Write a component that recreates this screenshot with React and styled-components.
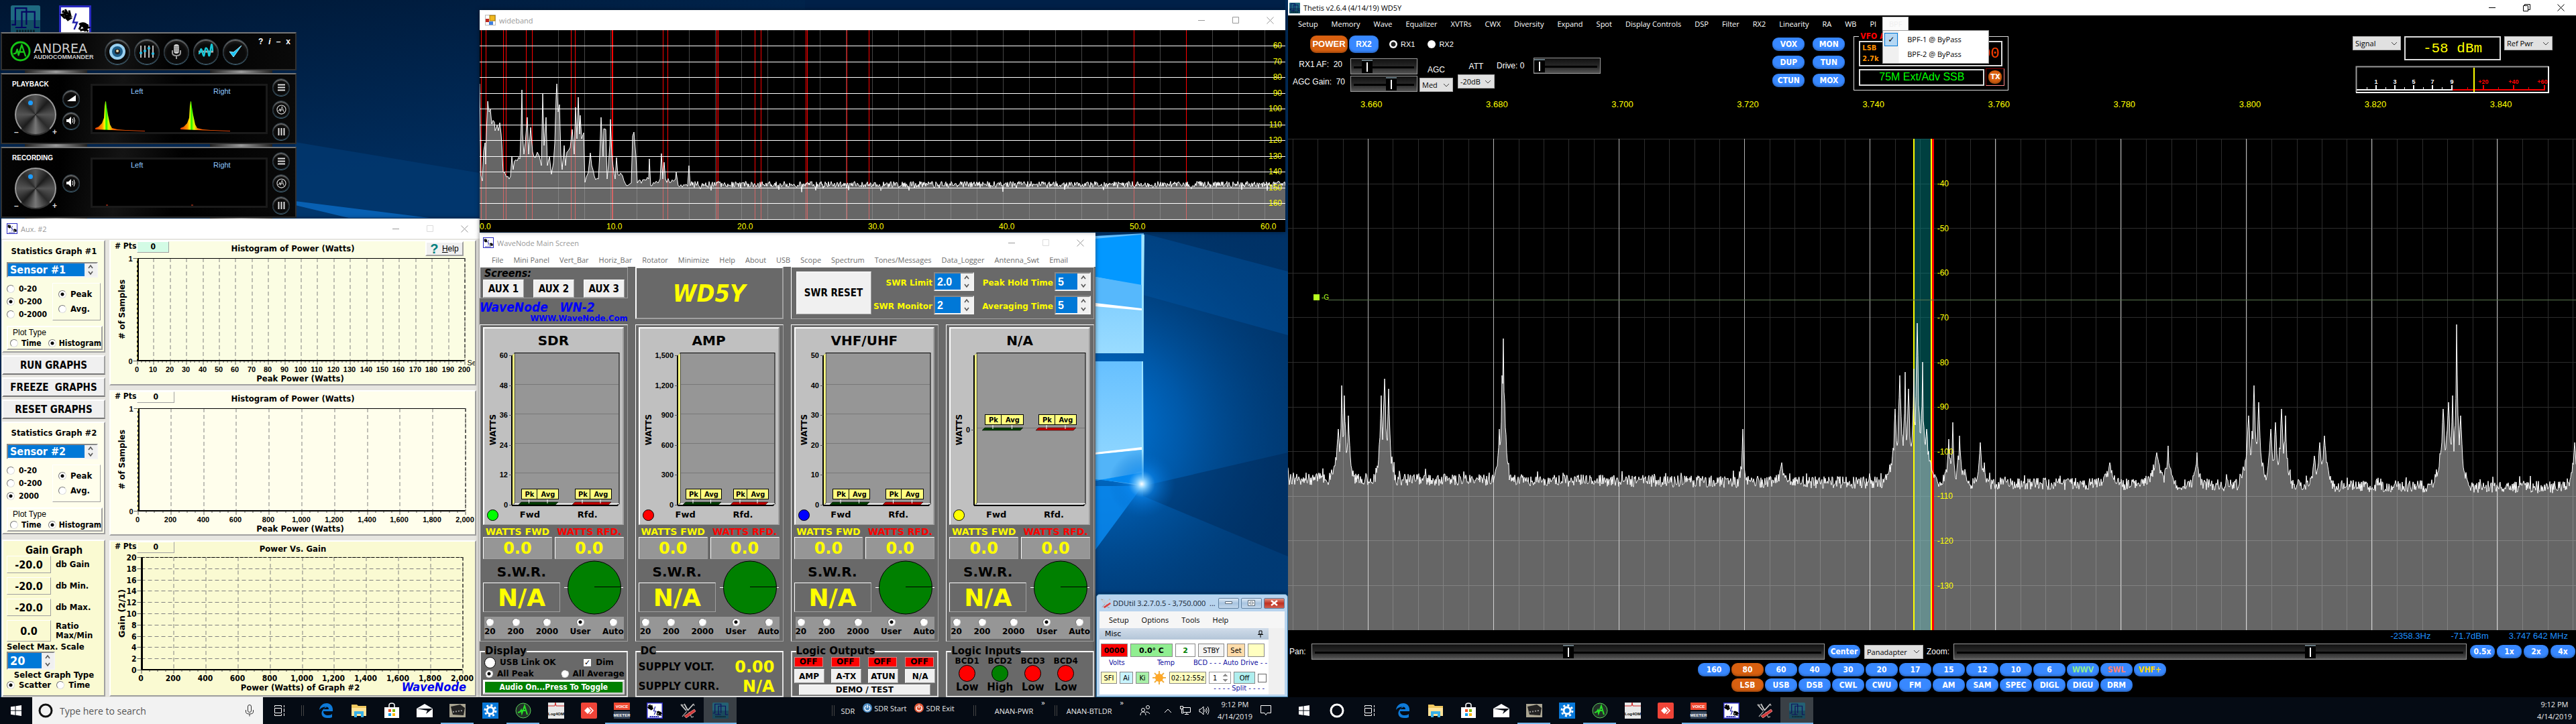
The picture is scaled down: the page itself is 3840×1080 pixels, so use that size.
import React from "react";
import styled, { createGlobalStyle, css } from "styled-components";

const tahoma = '"DejaVu Sans Condensed", "DejaVu Sans", sans-serif';
const verdana = '"DejaVu Sans", sans-serif';
const segoe = '"Open Sans", "Noto Sans", sans-serif';
const arial = '"Liberation Sans", sans-serif';
const mono = '"Liberation Mono", monospace';

const Global = createGlobalStyle`
  *, *::before, *::after { box-sizing: border-box; }
  html, body { margin: 0; background: #000; }
  body { font-family: ${segoe}; font-size: 11px; }
  button, input, select { margin: 0; padding: 0; border: 0; border-radius: 0; font: inherit; color: inherit; background: none; }
  svg { display: block; overflow: visible; }
  a { color: inherit; text-decoration: none; }
  h2, h3, p { margin: 0; font: inherit; }
  fieldset { margin: 0; padding: 0; border: 0; min-width: 0; }
`;

/* ---------- desktop ---------- */
const Screens = styled.div`
  display: grid;
  grid-template-columns: 1fr 1fr;
  min-height: 100vh;
`;
const Monitor = styled.main`
  display: flex;
  flex-direction: column;
  min-width: 0;
  position: relative;
  background: #00152e;
`;
const Desktop = styled.div`
  flex: 1;
  position: relative;
  overflow: hidden;
`;
const WallSvg = styled.svg`
  position: absolute;
  inset: 0;
  width: 100%;
  height: 100%;
`;
const Shortcuts = styled.div`
  position: absolute;
  left: 16px;
  top: 8px;
  display: flex;
  gap: 28px;
`;
const Win = styled.section`
  position: absolute;
  left: ${(p) => p.$x}px;
  top: ${(p) => p.$y}px;
  width: ${(p) => p.$w}px;
  height: ${(p) => p.$h}px;
  display: flex;
  flex-direction: column;
  overflow: hidden;
  box-shadow: 0 0 6px rgba(0, 0, 0, 0.5);
`;
const TitleBar = styled.header`
  display: flex;
  align-items: center;
  gap: 5px;
  height: ${(p) => p.$h || 30}px;
  flex: none;
  padding-left: ${(p) => p.$pad ?? 8}px;
  background: #fff;
  color: ${(p) => (p.$active ? "#000" : "#999")};
  font: 11px ${segoe};
  h2 { flex: 1; white-space: pre; }
`;
const CapBtn = styled.button`
  width: 46px;
  height: 100%;
  display: grid;
  place-items: center;
  color: ${(p) => (p.$dim ? "#dcdcdc" : "inherit")};
`;

const Wallpaper = () => (
  <WallSvg viewBox="0 0 1920 1040" preserveAspectRatio="none" aria-hidden="true">
    <defs>
      <linearGradient id="sky" x1="0" y1="0" x2="0.3" y2="1">
        <stop offset="0" stopColor="#001632" />
        <stop offset="0.3" stopColor="#002c5c" />
        <stop offset="1" stopColor="#003a75" />
      </linearGradient>
      <radialGradient id="glow" cx="1640" cy="640" r="360" gradientUnits="userSpaceOnUse">
        <stop offset="0" stopColor="#0078dc" />
        <stop offset="0.35" stopColor="#0058a8" />
        <stop offset="1" stopColor="#003468" stopOpacity="0" />
      </radialGradient>
      <linearGradient id="pane" x1="0" y1="0" x2="0" y2="1">
        <stop offset="0" stopColor="#66c0ff" />
        <stop offset="1" stopColor="#9adcff" />
      </linearGradient>
      <radialGradient id="flare" cx="1702" cy="722" r="50" gradientUnits="userSpaceOnUse">
        <stop offset="0" stopColor="#fff" />
        <stop offset="0.12" stopColor="#8fd4ff" />
        <stop offset="0.4" stopColor="#0a86ee" stopOpacity="0.6" />
        <stop offset="1" stopColor="#0064c0" stopOpacity="0" />
      </radialGradient>
    </defs>
    <rect width="1920" height="1040" fill="url(#sky)" />
    <path d="M440 212L715 258V330H440z" fill="#013a74" opacity=".7" />
    <path d="M440 300L640 325H520L440 306z" fill="#0a6cc4" opacity=".8" />
    <path d="M1200 0H1916V14H1200z" fill="#002048" />
    <rect x="1200" y="300" width="720" height="740" fill="url(#glow)" />
    <path d="M1704 348L1920 405V500L1704 440z" fill="#005cae" opacity=".35" />
    <path d="M1704 725L1920 675V830L1704 740z" fill="#001f48" opacity=".35" />
    <path d="M1633 725h70l-70 95z" fill="#0a8cf4" opacity=".8" />
    <path d="M1633 352l72-4v179h-72z" fill="url(#pane)" />
    <path d="M1633 356l68-6v76l-68-13z" fill="#0398ff" />
    <path d="M1633 413l69 12v37l-69-8z" fill="#56b8fc" />
    <path d="M1633 452l69 8v3l-69-6z" fill="#fff" />
    <path d="M1633 539h71v186l-71-11z" fill="url(#pane)" />
    <path d="M1633 675l69-8v4l-69 7z" fill="#fff" />
    <path d="M1633 678l69-7v35l-69 11z" fill="#52b4f8" />
    <path d="M1633 717l69-12v18l-69-8z" fill="#0290fa" />
    <path d="M1702 350h4l-2 177h-2zM1702 539h2l1 184h-3z" fill="#9fe4ff" />
    <rect x="1612" y="632" width="180" height="180" fill="url(#flare)" />
  </WallSvg>
);

/* ---------- small icons ---------- */
const WaveIcon = ({ s = 16 }) => (
  <svg width={s} height={s} viewBox="0 0 32 32" aria-hidden="true">
    <rect x="1" y="1" width="30" height="30" fill="#fff" stroke="#2a2ac0" strokeWidth="2" />
    <path d="M3 6l5 2-4 1 6 2-5 1 6 1-3 2M2 9l4 4M6 4l6 9M10 5l2 8M4 5l4 9M20 24l3-6 6 2M21 25l8-3-6-2 6 6M24 18l2 8M20 19q5-3 9 2" stroke="#000" fill="none" strokeWidth="2" />
    <path d="M17 8l-3 9h4l-3 7" stroke="#22a" fill="none" strokeWidth="1.6" />
    <path d="M6 28h18" stroke="#22a" strokeWidth="2.4" strokeDasharray="3 1" />
  </svg>
);
const HpsdrIcon = ({ s = 16, dim }) => (
  <svg width={s} height={s} viewBox="0 0 32 32" opacity={dim ? 0.8 : 1} aria-hidden="true">
    <rect x="0" y="0" width="32" height="32" rx="2" fill="#1f6a80" />
    <rect x="0" y="16" width="32" height="16" fill="#0b3c50" opacity=".6" />
    <path d="M1 21H5V3H17V21M12 24V7H26V24H31M5 24H17" stroke="#050560" fill="none" strokeWidth="1.6" />
    <path d="M6 28h20" stroke="#04202c" strokeWidth="3" strokeDasharray="2 1" />
  </svg>
);
const KnifeIcon = ({ s = 24 }) => (
  <svg width={s} height={s} viewBox="0 0 24 24" aria-hidden="true">
    <path d="M2 3l8 9M21 2l-9 10M7 2l5 9" stroke="#c8c8c8" strokeWidth="1.8" />
    <path d="M2 3l4 1M21 2l1 3M4 21l7-8M14 14l4 8 3-1" stroke="#999" strokeWidth="1.4" fill="none" />
    <path d="M22 10l2 3-14 10-3-3z" fill="#d03838" stroke="#f3a0a0" strokeWidth=".8" />
  </svg>
);
const AndreaMark = ({ s = 30, c = "#16c416", w = 3 }) => (
  <svg width={s} height={s} viewBox="0 0 32 32" fill="none" stroke={c} strokeWidth={w} strokeLinejoin="round" aria-hidden="true">
    <circle cx="16" cy="16" r="14" />
    <path d="M5 20l4-1 2-6 2 9 5-16 6 18M12 17h9" strokeWidth={w * 0.8} />
  </svg>
);
const Minus = () => <svg width="11" height="11" viewBox="0 0 11 11" aria-hidden="true"><path d="M0 5.5h10" stroke="currentColor" /></svg>;
const Box = () => <svg width="11" height="11" viewBox="0 0 11 11" aria-hidden="true"><path d="M.5.5h9v9h-9z" stroke="currentColor" fill="none" /></svg>;
const Cross = () => <svg width="11" height="11" viewBox="0 0 11 11" aria-hidden="true"><path d="M.5.5l10 10M10.500.5l-10 10" stroke="currentColor" /></svg>;
const Restore = () => <svg width="11" height="11" viewBox="0 0 11 11" aria-hidden="true"><path d="M.5 2.500h7v8h-7zM2.500 2.500v-2h8v8h-3" stroke="currentColor" fill="none" /></svg>;
const Chevron = () => <svg width="10" height="10" viewBox="0 0 10 10" aria-hidden="true"><path d="M1 3l4 4 4-4" stroke="#444" fill="none" /></svg>;

const Caption = ({ restore, dimMax }) => (
  <>
    <CapBtn aria-label="Minimize"><Minus /></CapBtn>
    <CapBtn aria-label="Maximize" $dim={dimMax}>{restore ? <Restore /> : <Box />}</CapBtn>
    <CapBtn aria-label="Close"><Cross /></CapBtn>
  </>
);

/* ---------- shared form parts ---------- */
const RadioInput = styled.input`
  appearance: none;
  flex: none;
  width: 12px;
  height: 12px;
  border-radius: 50%;
  background: #fff;
  border: 1px solid;
  border-color: #777 #ddd #ddd #777;
  &:checked { background: radial-gradient(circle, #000 0 2px, #fff 3px); }
`;
const RadioLabel = styled.label`
  display: flex;
  align-items: center;
  gap: ${(p) => p.$gap ?? 6}px;
  white-space: nowrap;
`;
const Radio = ({ name, label, on, gap }) => (
  <RadioLabel $gap={gap}><RadioInput type="radio" name={name} defaultChecked={on} />{label}</RadioLabel>
);
const ListBox = styled.div`
  display: grid;
  grid-template-columns: 1fr 18px;
  width: ${(p) => p.$w}px;
  height: ${(p) => p.$h}px;
  border: 2px solid;
  border-color: #888 #f4f4f4 #f4f4f4 #888;
  background: #fff;
  select {
    appearance: none;
    width: 100%;
    padding-left: 3px;
    background: #0078d7;
    color: #fff;
    font: bold ${(p) => p.$f}px ${(p) => p.$font || tahoma};
  }
  div { display: flex; flex-direction: column; background: #f0f0f0; }
  button { flex: 1; display: grid; place-items: center; min-height: 0; }
`;
const List = ({ label, value, w, h, f, font }) => (
  <ListBox $w={w} $h={h} $f={f} $font={font}>
    <select aria-label={label} defaultValue={value}><option>{value}</option></select>
    <div>
      <button aria-label={`${label} up`}><svg width="8" height="6" viewBox="0 0 8 6"><path d="M1 5l3-4 3 4" stroke="#555" strokeWidth="1.6" fill="none" /></svg></button>
      <button aria-label={`${label} down`}><svg width="8" height="6" viewBox="0 0 8 6"><path d="M1 1l3 4 3-4" stroke="#555" strokeWidth="1.6" fill="none" /></svg></button>
    </div>
  </ListBox>
);

/* ---------- Andrea AudioCommander ---------- */
const AndreaWin = styled.section`
  position: absolute;
  left: 1px;
  top: 48px;
  width: 441px;
  display: flex;
  flex-direction: column;
  color: #ddd;
  font: 11px ${arial};
`;
const Slab = styled.div`
  display: flex;
  height: ${(p) => p.$h}px;
  border: 2px solid #303030;
  border-top-color: #777;
  background: linear-gradient(100deg, #050505, #000 20%, #141414 40%, #000 60%, #0a0a0a);
`;
const Hinges = styled.div`
  display: flex;
  justify-content: space-between;
  height: 4px;
  padding: 0 36px;
  i { width: 93px; background: linear-gradient(90deg, #222, #999, #222); }
`;
const Brand = styled.div`
  display: flex;
  align-items: center;
  gap: 4px;
  width: 150px;
  padding-left: 12px;
  line-height: 1;
  b { display: block; font: 19px/16px ${verdana}; color: #ccc; }
  span { display: block; font: bold 9px/10px ${arial}; color: #ccc; }
`;
const BigBtns = styled.div`
  display: flex;
  flex: 1;
  align-items: center;
  gap: 6px;
  padding-left: 3px;
`;
const RoundBtn = styled.button`
  width: ${(p) => p.$s}px;
  height: ${(p) => p.$s}px;
  border-radius: 50%;
  display: grid;
  place-items: center;
  border: 1px solid #33424c;
  background: radial-gradient(circle at 50% 60%, #0a0a0a 50%, #3a3a3a);
  box-shadow: inset 0 2px 1px #666, 0 1px 0 #456c80;
`;
const SysKeys = styled.div`
  display: flex;
  gap: 8px;
  padding: 4px 7px;
  align-items: flex-start;
  color: #fff;
  font: bold 12px/16px ${arial};
`;
const DeviceLeft = styled.div`
  width: 90px;
  padding: 9px 0 0 15px;
  h3 { font: bold 10px/12px ${arial}; color: #fff; }
`;
const Knob = styled.div`
  position: relative;
  width: 62px;
  height: 62px;
  margin: 8px 0 0 4px;
  border-radius: 50%;
  border: 2px solid #999;
  border-bottom-color: #333;
  background: conic-gradient(#555, #1c1c1c 12%, #555 25%, #2a2a2a 38%, #777 50%, #1c1c1c 62%, #555 75%, #2a2a2a 88%, #555);
  &::after { content: ""; position: absolute; left: 18px; top: 8px; width: 7px; height: 7px; border-radius: 50%; background: #1c9cff; }
`;
const KnobEnds = styled.div`
  display: flex;
  justify-content: space-between;
  width: 64px;
  margin: -11px 0 0 3px;
  font: bold 12px/12px ${arial};
`;
const SideBtns = styled.div`
  display: flex;
  flex-direction: column;
  justify-content: center;
  gap: ${(p) => p.$g}px;
  width: ${(p) => p.$w}px;
  padding-top: 2px;
`;
const Display = styled.div`
  flex: 1;
  margin: 14px 7px 13px 0;
  border: 3px solid #1a1a1a;
  background: #000;
`;
const Burst = ({ x, low }) =>
  low ? <path d={`M${x + 16} 67h3`} stroke="#e04020" /> : (
    <path d={`M${x} 64V62l5-2 5-5 3-8 1-17 1-7h1l1 8 2 12 3 14 3 5 8 2 12 1 29 1v1z`} fill="url(#heat)" />
  );
const Device = ({ title, low }) => (
  <Slab $h={106}>
    <DeviceLeft>
      <h3>{title}</h3>
      <Knob />
      <KnobEnds><span>–</span><span>+</span></KnobEnds>
    </DeviceLeft>
    <SideBtns $w={42} $g={7}>
      {!low && <RoundBtn $s={26} aria-label="Level"><svg width="13" height="9"><path d="M0 9L13 0v9z" fill="#fff" /></svg></RoundBtn>}
      <RoundBtn $s={26} aria-label="Mute"><svg width="14" height="12" viewBox="0 0 14 12"><path d="M0 4h3l4-4v12L3 8H0z" fill="#fff" /><path d="M9 3q2 3 0 6M11 1q3 5 0 10" stroke="#fff" fill="none" /></svg></RoundBtn>
    </SideBtns>
    <Display>
      <svg width="100%" height="100%" viewBox="0 0 258 68" preserveAspectRatio="none" role="img" aria-label={`${title} level`}>
        <defs><linearGradient id="heat"><stop offset="0" stopColor="#e03000" /><stop offset=".14" stopColor="#ff9a00" /><stop offset=".19" stopColor="#ff0" /><stop offset=".22" stopColor="#1cf000" /><stop offset=".27" stopColor="#e0ff00" /><stop offset=".36" stopColor="#f60" /><stop offset="1" stopColor="#d84010" /></linearGradient></defs>
        <text x="57" y="12" fill="#8fc8ff" fontSize="11">Left</text>
        <text x="180" y="12" fill="#8fc8ff" fontSize="11">Right</text>
        <Burst x={4} low={low} />
        <Burst x={131} low={low} />
      </svg>
    </Display>
    <SideBtns $w={34} $g={7}>
      <RoundBtn $s={26} aria-label="Menu"><svg width="11" height="11"><path d="M0 1.500h11M0 5.500h11M0 9.500h11" stroke="#ddd" strokeWidth="2" /></svg></RoundBtn>
      <RoundBtn $s={26} aria-label="Profile"><AndreaMark s={15} c="#ddd" w={2.4} /></RoundBtn>
      <RoundBtn $s={26} aria-label="Equalizer"><svg width="11" height="11"><path d="M1.500 0v11M5.500 0v11M9.500 0v11" stroke="#ddd" strokeWidth="2" /></svg></RoundBtn>
    </SideBtns>
  </Slab>
);
const Andrea = () => (
  <AndreaWin>
    <Slab $h={57}>
      <Brand><AndreaMark s={31} /><div><b>ANDREA</b><span>AUDIOCOMMANDER</span></div></Brand>
      <BigBtns>
        <RoundBtn $s={38} aria-label="Speaker"><svg width="26" height="26"><circle cx="13" cy="13" r="12" fill="#9ad0f0" /><circle cx="13" cy="13" r="8" fill="#1c5c88" /><circle cx="13" cy="13" r="4" fill="#222" /><circle cx="13" cy="12" r="2" fill="#e8d8b0" /></svg></RoundBtn>
        <RoundBtn $s={38} aria-label="Mixer"><svg width="22" height="20"><path d="M2 1v18M8 1v18M14 1v18M20 1v18" stroke="#bbb" strokeWidth="2" /><path d="M0 12h4M6 9h4M12 5h4M18 13h4" stroke="#20b8e0" strokeWidth="3" /></svg></RoundBtn>
        <RoundBtn $s={38} aria-label="Microphone"><svg width="16" height="24"><rect x="4" y="1" width="8" height="14" rx="4" fill="#ccc" /><path d="M4 5h8M4 8h8M4 11h8" stroke="#555" /><path d="M2 10v4q0 4 6 4t6-4v-4M8 18v5" stroke="#999" strokeWidth="2" fill="none" /></svg></RoundBtn>
        <RoundBtn $s={38} aria-label="Wave"><svg width="24" height="18"><path d="M1 9h22" stroke="#aaa" strokeWidth="3" /><path d="M1 12q2 0 3-5t3 4 3 0 3-7 3 9 3-8 3 3" stroke="#18c8d8" strokeWidth="2.4" fill="none" /></svg></RoundBtn>
        <RoundBtn $s={38} aria-label="Apply"><svg width="20" height="20"><path d="M1 10l6 8L19 1 7 11z" fill="#18c4f4" stroke="#9ae8ff" /></svg></RoundBtn>
      </BigBtns>
      <SysKeys><span>?</span><i>i</i><span>–</span><span>x</span></SysKeys>
    </Slab>
    <Hinges><i /><i /></Hinges>
    <Device title="PLAYBACK" />
    <Hinges><i /><i /></Hinges>
    <Device title="RECORDING" low />
    <Hinges><i /><i /></Hinges>
  </AndreaWin>
);

/* ---------- Aux #2 ---------- */
const raised = css`
  border: 2px solid;
  border-color: #fff #a0a0a0 #a0a0a0 #fff;
`;
const thin = css`
  border: 1px solid;
  border-color: #fff #a0a0a0 #a0a0a0 #fff;
`;
const AuxBody = styled.div`
  flex: 1;
  display: grid;
  grid-template-columns: 154px 1fr;
  gap: 6px;
  padding: 2px 5px 1px 1px;
  background: #e6e5e0;
  color: #000;
  font: bold 12px/14px ${tahoma};
  min-height: 0;
`;
const AuxSide = styled.div`
  display: grid;
  grid-template-rows: 168px 29px 29px 29px 168px 1fr;
  gap: 4px;
`;
const AuxPanel = styled.div`
  ${raised}
  background: ${(p) => p.$bg};
  padding: ${(p) => p.$pad || "7px 2px 2px 5px"};
  display: flex;
  flex-direction: column;
  gap: ${(p) => p.$gap || 0}px;
  min-width: 0;
  min-height: 0;
  margin-top: ${(p) => p.$mt || 0}px;
`;
const AuxTitle = styled.h3`
  font: bold ${(p) => p.$f || 13}px/16px ${tahoma};
  text-align: center;
  white-space: nowrap;
  padding-right: 2px;
`;
const GraphBtn = styled.button`
  ${raised}
  border-bottom-color: #777;
  background: #f0f0f0;
  font: bold 15px ${tahoma};
  white-space: pre;
`;
const Split = styled.div`
  display: grid;
  grid-template-columns: 68px 1fr;
  height: 60px;
  > div:first-child { display: flex; flex-direction: column; justify-content: space-around; }
`;
const ThinBox = styled.div`
  ${thin}
  display: flex;
  flex-direction: column;
  justify-content: space-evenly;
  padding-left: 8px;
  font-size: 13px;
  margin-right: 3px;
`;
const PlotType = styled.fieldset`
  ${raised}
  margin: auto 0 0 0;
  height: 38px;
  padding: 0 0 0 1px;
  font: 12px/16px ${arial};
  p { padding-left: 6px; }
  div { display: flex; justify-content: space-between; font: bold 12px/16px ${tahoma}; padding-left: 2px; }
`;
const GainRow = styled.div`
  display: grid;
  grid-template-columns: 66px 1fr;
  gap: 7px;
  align-items: center;
  height: ${(p) => p.$h || 26}px;
  margin-bottom: ${(p) => p.$mb ?? 6}px;
  font-size: 13px;
  output { ${thin} height: 100%; display: grid; place-items: center; font: bold 16px ${tahoma}; }
`;
const ChartPanel = styled.div`
  ${raised}
  position: relative;
  background: ${(p) => p.$bg};
  display: flex;
  flex-direction: column;
  min-height: 0;
  overflow: hidden;
`;
const ChartCol = styled.div`
  display: grid;
  grid-template-rows: 217px 217px 1fr;
  gap: 7px;
  min-width: 0;
`;
const ChartHead = styled.div`
  display: grid;
  grid-template-columns: 1fr auto 1fr;
  height: 22px;
  h3 { font: bold 13px/22px ${tahoma}; }
  > div:first-child { display: flex; padding-left: 6px; gap: 1px; font: bold 12px/14px ${tahoma}; }
  output { ${thin} width: ${(p) => p.$w}px; height: 17px; background: ${(p) => p.$pt || "transparent"}; text-align: center; }
`;
const HelpBtn = styled.button`
  ${raised}
  justify-self: end;
  width: 57px;
  height: 22px;
  margin-right: 17px;
  display: flex;
  align-items: center;
  justify-content: space-evenly;
  background: #f0f0f0;
  font: 12px ${arial};
  b { color: #008080; font: bold 20px/20px ${arial}; }
`;

const range = (n) => Array.from({ length: n }, (_, i) => i);
const Plot = ({ h, x0, x1, y0, y1, xs, ys, hgrid, big, xlabel, ylabel, mark, extra }) => {
  const lf = big ? { fontFamily: tahoma, fontSize: 12 } : { fontFamily: arial, fontSize: 11 };
  const nx = xs.length - 1;
  const px = (i) => Math.round(x0 + ((x1 - x0) * i) / nx) + 0.5;
  const py = (i) => Math.round(y1 - ((y1 - y0) * i) / (ys.length - 1)) + 0.5;
  return (
    <svg width="100%" height={h} viewBox={`0 0 542 ${h}`} fontWeight="bold" role="img" aria-label={xlabel}>
      <g stroke="#808080" strokeDasharray="6 4">
        {xs.map((_, i) => <path key={i} d={`M${px(i)} ${y0}V${y1}`} />)}
        {hgrid && ys.map((_, i) => <path key={i} d={`M${x0} ${py(i)}H${x1}`} />)}
      </g>
      <path d={`M${x0} ${y0 + 0.5}H${x1}`} stroke="#000" strokeDasharray={hgrid ? "5 2" : "none"} />
      <path d={`M${x1 + 0.5} ${y0}V${y1}`} stroke="#000" strokeDasharray="5 3" />
      <path d={`M${x0 + 1} ${y0}V${y1}`} stroke="#000" strokeWidth="3" />
      {mark && <path d={`M${x0} ${y0}V${y1}`} stroke="#e8e060" strokeDasharray="4 3" />}
      <path d={`M${x0} ${y1}H${x1}`} stroke="#000" strokeWidth="2" />
      <g stroke="#555">
        {range(nx * 4 + 1).map((i) => <path key={i} d={`M${Math.round(x0 + ((x1 - x0) * i) / (nx * 4)) + 0.5} ${y1 + 1}v${i % 4 ? 2 : 5}`} />)}
        {ys.map((_, i) => <path key={i} d={`M${x0 - 6} ${py(i)}h6`} />)}
      </g>
      {xs.map((t, i) => <text key={i} x={px(i) - 1} y={y1 + 17} textAnchor="middle" {...lf}>{t}</text>)}
      {ys.map((t, i) => <text key={i} x={x0 - 7} y={py(i) + 4} textAnchor="end" {...lf}>{t}</text>)}
      <text x="282" y={y1 + 31} textAnchor="middle" fontFamily={tahoma} fontSize="13">{xlabel}</text>
      <text transform={`translate(20 ${(y0 + y1) / 2}) rotate(-90)`} textAnchor="middle" fontFamily={verdana} fontSize={big ? 13 : 12}>{ylabel}</text>
      {extra}
    </svg>
  );
};

const StatsPanel = ({ n, bg, last, on }) => (
  <AuxPanel $bg={bg} $gap={8}>
    <AuxTitle>Statistics Graph #{n}</AuxTitle>
    <List label={`Sensor for graph ${n}`} value={`Sensor #${n}`} w={136} h={24} f={16} />
    <Split>
      <div>
        <Radio name={`range${n}`} label="0-20" />
        <Radio name={`range${n}`} label="0-200" on={on === 1} />
        <Radio name={`range${n}`} label={last} on={on === 2} />
      </div>
      <ThinBox>
        <Radio name={`mode${n}`} label="Peak" on />
        <Radio name={`mode${n}`} label="Avg." />
      </ThinBox>
    </Split>
    <PlotType>
      <p>Plot Type</p>
      <div><Radio name={`plot${n}`} label="Time" gap={5} /><Radio name={`plot${n}`} label="Histogram" gap={4} on /></div>
    </PlotType>
  </AuxPanel>
);
const CornerLogo = styled.em`
  position: absolute;
  right: 13px;
  bottom: 2px;
  color: #0000f0;
  font: italic bold 18px/20px ${tahoma};
`;
const MaxScale = styled.div`
  display: flex;
  flex-direction: column;
  font: bold 13px/14px ${tahoma};
`;
const RadioRow = styled.div`
  display: flex;
  gap: ${(p) => p.$g || 8}px;
`;
const thousands = range(11).map((i) => (i * 200).toLocaleString("en-US"));
const Aux = () => (
  <Win $x={2} $y={326} $w={713} $h={714}>
    <TitleBar><WaveIcon /><h2>Aux. #2</h2><Caption dimMax /></TitleBar>
    <AuxBody>
      <AuxSide>
        <StatsPanel n={1} bg="#fbfde3" last="0-2000" on={1} />
        <GraphBtn>RUN GRAPHS</GraphBtn>
        <GraphBtn>FREEZE  GRAPHS</GraphBtn>
        <GraphBtn>RESET GRAPHS</GraphBtn>
        <StatsPanel n={2} bg="#fffeec" last="2000" on={2} />
        <AuxPanel $bg="#fafad2" $mt={4} $pad="6px 2px 0 5px">
          <AuxTitle $f={15}>Gain Graph</AuxTitle>
          <GainRow><output>-20.0</output><span>db Gain</span></GainRow>
          <GainRow><output>-20.0</output><span>db Min.</span></GainRow>
          <GainRow><output>-20.0</output><span>db Max.</span></GainRow>
          <GainRow $h={32} $mb={1}><output>0.0</output><span>Ratio Max/Min</span></GainRow>
          <MaxScale>
            <span>Select Max. Scale</span>
            <List label="Max scale" value="20" w={72} h={27} f={18} />
            <AuxTitle>Select Graph Type</AuxTitle>
            <RadioRow><Radio name="gt" label="Scatter" on /><Radio name="gt" label="Time" /></RadioRow>
          </MaxScale>
        </AuxPanel>
      </AuxSide>
      <ChartCol>
        <ChartPanel $bg="#fbfde3">
          <ChartHead $w={48} $pt="#d3fbe5">
            <div># Pts<output>0</output></div>
            <h3>Histogram of Power (Watts)</h3>
            <HelpBtn><b>?</b><span><u>H</u>elp</span></HelpBtn>
          </ChartHead>
          <Plot h={191} x0={39} x1={527} y0={3} y1={156} mark xs={range(21).map((i) => i * 10)} ys={[0, 1]} xlabel="Peak Power (Watts)" ylabel="# of Samples"
            extra={<text x="531" y="163" fontFamily={arial} fontWeight="normal" fontSize="11">Se</text>} />
        </ChartPanel>
        <ChartPanel $bg="#fffeec">
          <ChartHead $w={56}>
            <div># Pts<output>0</output></div>
            <h3>Histogram of Power (Watts)</h3>
            <span />
          </ChartHead>
          <Plot h={191} x0={40} x1={528} y0={3} y1={156} mark xs={thousands} ys={[0, 1]} xlabel="Peak Power (Watts)" ylabel="# of Samples" />
        </ChartPanel>
        <ChartPanel $bg="#fafad2">
          <ChartHead $w={56}>
            <div># Pts<output>0</output></div>
            <h3>Power Vs. Gain</h3>
            <span />
          </ChartHead>
          <Plot h={206} x0={45} x1={524} y0={1} y1={169} hgrid big xs={thousands} ys={range(11).map((i) => i * 2)} xlabel="Power (Watts) of Graph #2" ylabel="Gain (2/1)" />
          <CornerLogo>WaveNode</CornerLogo>
        </ChartPanel>
      </ChartCol>
    </AuxBody>
  </Win>
);

/* ---------- wideband ---------- */
const WbPlot = styled.div`
  flex: 1;
  background: #000;
  svg { width: 100%; height: 100%; }
`;
const rng = (seed) => () => ((seed = (seed * 16807) % 2147483647) / 2147483647);
const wbPeaks = [0,80,1,155,2,217,4,225,6,180,8,168,9,200,10,155,12,106,14,122,16,118,18,140,22,137,23,150,26,142,28,150,30,138,32,155,33,170,35,212,40,219,44,222,46,218,48,188,50,208,52,195,56,195,60,192,62,140,63,89,64,155,66,185,68,168,71,130,73,185,76,145,79,182,83,190,86,182,89,188,92,202,94,95,96,172,99,130,101,202,104,188,107,215,110,198,112,168,114,98,115,80,117,122,119,111,121,185,123,208,126,172,128,202,130,182,135,175,138,148,141,185,143,115,145,162,147,100,149,155,150,127,152,162,155,153,157,227,162,212,165,183,167,202,171,218,177,222,179,185,181,130,184,188,185,147,188,148,190,222,194,172,195,133,197,185,202,222,204,190,206,215,213,217,219,232,226,228,228,158,230,152,233,188,235,228,246,223,252,222,253,192,255,232,266,228,269,222,271,184,273,222,275,197,277,222,285,227,292,222,293,212,296,232,310,233,312,202,314,232];
const wbTrace = (() => {
  const r = rng(77);
  const pts = [];
  for (let i = 0; i < wbPeaks.length; i += 2) {
    const [x, y, nx, ny] = wbPeaks.slice(i, i + 4);
    pts.push([x, y]);
    if (nx - x > 3) for (let k = x + 2; k < nx - 1; k += 2) pts.push([k, y + ((ny - y) * (k - x)) / (nx - x) + (r() - 0.5) * 8]);
  }
  for (let x = 316; x <= 1201; x += 1) pts.push([x, 230 + (r() - 0.5) * 9 + (r() > 0.97 ? 7 : 0)]);
  return pts.map(([x, y]) => `${x},${y.toFixed(1)}`).join(" ");
})();
const wbRed = [2, 9, 35, 39, 69, 78, 136, 142, 197, 198, 273, 280, 353, 355, 410, 419, 486, 488, 547, 580, 975, 1053];
const Wideband = () => (
  <Win $x={715} $y={15} $w={1201} $h={331}>
    <TitleBar>
      <svg width="16" height="16" aria-hidden="true"><rect x=".5" y=".5" width="15" height="15" fill="#fff" stroke="#bbb" /><rect x="7" y="1" width="8" height="8" fill="#f0b820" stroke="#a87800" /><rect x="1" y="6" width="5" height="5" fill="#c02820" /><rect x="6" y="10" width="6" height="5" fill="#4080e0" /></svg>
      <h2>wideband</h2><Caption />
    </TitleBar>
    <WbPlot>
      <svg viewBox="0 0 1201 301" preserveAspectRatio="none" role="img" aria-label="Wideband spectrum">
        <g stroke="#444">{range(30).map((i) => <path key={i} d={`M${(i + 1) * 39 + 0.5} 0V282`} />)}</g>
        <g stroke="#f00">{wbRed.map((x) => <path key={x} d={`M${x + 0.5} 0V282`} />)}</g>
        <polygon points={`0,282 ${wbTrace} 1201,282`} fill="#b0b0b0" fillOpacity=".58" />
        <g stroke="#fff">{range(12).map((i) => <path key={i} d={`M0 ${Math.round(23 + i * 23.5) + 0.5}H1201`} />)}</g>
        <polyline points={wbTrace} fill="none" stroke="#fff" />
        <g fill="#ff0" fontFamily={arial} fontSize="12">
          {range(11).map((i) => <text key={i} x="1196" y={Math.round(27 + i * 23.5)} textAnchor="end">{60 + i * 10}</text>)}
          {range(7).map((i) => <text key={i} x={i ? i * 195 - 6 : 0} y="297">{(i * 10).toFixed(1)}</text>)}
        </g>
      </svg>
    </WbPlot>
  </Win>
);

/* ---------- WaveNode main ---------- */
const MenuBar = styled.nav`
  display: flex;
  align-items: center;
  flex: none;
  gap: ${(p) => p.$gap}px;
  height: ${(p) => p.$h}px;
  padding-left: ${(p) => p.$pad}px;
  background: ${(p) => p.$bg};
  color: ${(p) => p.$c};
  font: ${(p) => p.$f || 11}px ${segoe};
  button { white-space: nowrap; height: 20px; }
`;
const WnBody = styled.div`
  flex: 1;
  display: grid;
  grid-template-columns: repeat(4, 1fr);
  grid-template-rows: 78px 473px 1fr;
  gap: 8px 11px;
  padding: 0 2px 0 0;
  background: #696969;
  color: #000;
  font: bold 13px/15px ${verdana};
`;
const Sunk = styled.div`
  ${thin}
  border-width: ${(p) => p.$b || 1}px;
  min-width: 0;
  grid-column: span ${(p) => p.$span || 1};
  display: flex;
`;
const ScreensCell = styled.div`
  display: flex;
  flex-direction: column;
  > a { text-align: right; color: #00f; font: bold 13px/13px ${tahoma}; }
  > em { color: #00f; font: italic bold 19px/20px ${tahoma}; white-space: pre; padding-top: 3px; }
`;
const ScreensBox = styled.div`
  ${thin}
  height: 52px;
  em { display: block; font: italic bold 16px/18px ${tahoma}; padding-left: 6px; }
  div { display: flex; justify-content: space-between; padding: 0 4px; }
`;
const FlatBtn = styled.button`
  ${thin}
  background: #f0f0f0;
  width: ${(p) => (p.$w ? `${p.$w}px` : "auto")};
  height: ${(p) => p.$h}px;
  font: bold ${(p) => p.$f}px ${(p) => p.$font || tahoma};
  white-space: nowrap;
`;
const CallSign = styled.em`
  margin: auto;
  color: #ff0;
  font: italic bold 36px ${tahoma};
`;
const SwrGrid = styled.div`
  flex: 1;
  display: grid;
  grid-template-columns: 1fr 60px 116px 54px;
  grid-template-rows: 27px 27px;
  gap: 8px 2px;
  align-content: center;
  padding-right: 4px;
  text-align: right;
  color: #ff0;
  font: bold 12px/32px ${verdana};
  white-space: nowrap;
`;
const ChannelBox = styled.div`
  ${thin}
  display: flex;
  flex-direction: column;
  padding: 3px 5px 0 4px;
  min-width: 0;
`;
const MeterCard = styled.div`
  ${thin}
  border-width: 2px 2px 1px 2px;
  height: 295px;
  background: #c0c0c0;
  display: flex;
  flex-direction: column;
  h3 { font: bold 20px/36px ${verdana}; text-align: center; }
`;
const MeterFoot = styled.div`
  display: grid;
  grid-template-columns: 16px 1fr 1fr;
  align-items: center;
  padding: 0 14px 0 4px;
  height: 20px;
  gap: 10px;
  text-align: center;
  line-height: 14px;
`;
const Led = styled.i`
  display: block;
  width: ${(p) => p.$s || 17}px;
  height: ${(p) => p.$s || 17}px;
  border-radius: 50%;
  border: 1px solid #000;
  background: ${(p) => p.$c};
`;
const Pair = styled.div`
  display: grid;
  grid-template-columns: 1fr 1fr;
  column-gap: 4px;
  padding-top: 3px;
  span { color: #ff0; font: bold 14px/15px ${verdana}; white-space: nowrap; text-align: center; }
  span:nth-child(2) { color: #f00; }
  output { ${thin} height: 33px; background: #969696; color: #ff0; font: bold 24px/32px ${verdana}; text-align: center; }
`;
const SwrRow = styled.div`
  display: grid;
  grid-template-columns: 115px 1fr;
  gap: 4px;
  padding-top: 2px;
  height: 83px;
  p { font: bold 20px/32px ${verdana}; text-align: center; padding-top: 1px; }
  output { ${thin} display: block; height: 44px; color: #ff0; font: bold 36px/44px ${verdana}; text-align: center; }
`;
const ScaleRow = styled.div`
  display: flex;
  justify-content: space-between;
  height: 33px;
  margin: 3px 0 0 2px;
  padding: 2px 0 0 0;
  background: #969696;
  label { display: flex; flex-direction: column; align-items: center; gap: 1px; font: bold 12px/15px ${verdana}; }
`;
const Tags = ({ p, y, c, by }) => (
  <g>
    <path d={`M${p[0]} ${by}h${p[2] - p[0]}l-4 4h${p[0] - p[2]}z`} fill={c} stroke="#000" strokeWidth=".5" />
    <path d={`M${(p[0] + p[1]) / 2} ${y + 15}V${by + 2}M${(p[1] + p[2]) / 2} ${y + 15}V${by + 2}`} stroke="#fff" />
    <g fill="#ffff80" stroke="#000"><rect x={p[0] + 0.5} y={y + 0.5} width={p[1] - p[0]} height="15" /><rect x={p[1] + 0.5} y={y + 0.5} width={p[2] - p[1]} height="15" /></g>
    <g fontFamily={tahoma} fontSize="11" fontWeight="bold" textAnchor="middle"><text x={(p[0] + p[1]) / 2 + 1} y={y + 12}>Pk</text><text x={(p[1] + p[2]) / 2 + 1} y={y + 12}>Avg</text></g>
  </g>
);
const Channel = ({ title, left, right, labels, led, fwd, rfd, mid }) => (
  <ChannelBox>
    <MeterCard>
      <h3>{title}</h3>
      <svg width="205" height="232" viewBox="0 0 205 232" role="img" aria-label={`${title} power`}>
        <rect x={left} y=".5" width={right - left} height="225" fill="#969696" stroke="#000" />
        <path d={`M${left - 4} 4L${left} 1V224L${left - 4} 228z`} fill="#ffff80" stroke="#777" strokeWidth=".5" />
        <path d={`M${left - 4} 4V228`} stroke="#000" strokeWidth="2" />
        <path d={`M${left - 4} 228H${right - 3}l3-3`} stroke="#000" strokeWidth="2" fill="none" />
        <path d={`M${left} 225.500H${right}`} stroke="#fff" strokeWidth="1.500" />
        {!mid && range(4).map((i) => <path key={i} d={`M${left + 1} ${47.5 + i * 44}H${right - 1}`} stroke="#777" />)}
        {mid && <path d={`M${left + 1} 112.500H${right - 1}`} stroke="#777" />}
        <g fontFamily={arial} fontWeight="bold" fontSize="11" textAnchor="end">
          {labels.map((t, i) => {
            const y = mid ? 115 : 4 + i * 44.6;
            return <g key={t}><text x={left - 10} y={Math.round(y) + 4}>{t}</text><path d={`M${left - 8} ${Math.round(y) + 0.5}h4`} stroke="#555" /></g>;
          })}
        </g>
        <text transform="translate(17 115) rotate(-90)" textAnchor="middle" fontFamily={verdana} fontWeight="bold" fontSize="12">WATTS</text>
        <Tags p={fwd} y={mid ? 92 : 203} by={mid ? 112 : 223} c="#003c00" />
        <Tags p={rfd} y={mid ? 92 : 203} by={mid ? 112 : 223} c="#c00000" />
      </svg>
      <MeterFoot><Led $c={led} /><span>Fwd</span><span>Rfd.</span></MeterFoot>
    </MeterCard>
    <Pair><span>WATTS FWD</span><span>WATTS RFD.</span><output>0.0</output><output>0.0</output></Pair>
    <SwrRow>
      <div><p>S.W.R.</p><output>N/A</output></div>
      <svg width="92" height="81" viewBox="0 0 92 81" role="img" aria-label="SWR gauge">
        <path d="M2 40.500h88" stroke="#fff" />
        <circle cx="47" cy="40.500" r="39.500" fill="#008000" stroke="#000" />
        <path d="M47 39.500h40" stroke="#000" />
      </svg>
    </SwrRow>
    <ScaleRow>
      {["20", "200", "2000", "User", "Auto"].map((t) => <label key={t}><RadioInput type="radio" name={`scale-${title}`} defaultChecked={t === "User"} />{t}</label>)}
    </ScaleRow>
  </ChannelBox>
);
const Group = styled.fieldset`
  border: 2px solid #ddd;
  border-top-color: #fff;
  margin: -2px 0 0 0;
  padding: 0 3px;
  legend { padding: 0; margin-left: 3px; font: bold 15px/17px ${verdana}; }
`;
const Line = styled.div`
  display: flex;
  align-items: center;
  justify-content: ${(p) => p.$j || "space-between"};
  height: ${(p) => p.$h}px;
  gap: ${(p) => p.$g || 0}px;
  padding: ${(p) => p.$p || 0};
  font: bold ${(p) => p.$f || 12}px/15px ${verdana};
  white-space: nowrap;
`;
const Check = styled.input`
  appearance: none;
  width: 13px;
  height: 13px;
  background: #fff;
  border: 1px solid #666;
  display: grid;
  place-items: center;
  &:checked::after { content: "✓"; font: bold 11px/11px ${verdana}; color: #000; }
`;
const AudioBtn = styled.button`
  width: 100%;
  height: 22px;
  background: #008000;
  color: #fff;
  border: 3px solid;
  border-color: #fff #ccc #ccc #fff;
  font: bold 12px/14px ${tahoma};
`;
const Supply = styled.div`
  display: flex;
  justify-content: space-between;
  align-items: center;
  height: 29px;
  font: bold 15px ${verdana};
  padding-right: 8px;
  white-space: nowrap;
  output { color: #ff0; font: bold 24px/28px ${verdana}; }
`;
const Outs = styled.div`
  display: grid;
  grid-template-columns: repeat(4, 1fr);
  gap: 3px 10px;
  span { background: #f00; border: 1px solid #c88; text-align: center; font: bold 12px/13px ${verdana}; margin-right: 2px; }
  button { min-width: 0; }
`;
const Ins = styled.div`
  display: grid;
  grid-template-columns: repeat(4, 49px);
  justify-items: center;
  padding-left: 2px;
  font: bold 12px/12px ${verdana};
  b { font: bold 15px/16px ${verdana}; }
`;
const Bit = styled.div`
  display: flex;
  flex-direction: column;
  align-items: center;
`;
const WaveNode = () => (
  <Win $x={715} $y={347} $w={918} $h={693}>
    <TitleBar $pad={5}><WaveIcon /><h2>WaveNode Main Screen</h2><Caption dimMax /></TitleBar>
    <MenuBar $gap={15} $h={21} $pad={18} $bg="#fff" $c="#6d6d6d">
      {["File", "Mini Panel", "Vert_Bar", "Horiz_Bar", "Rotator", "Minimize", "Help", "About", "USB", "Scope", "Spectrum", "Tones/Messages", "Data_Logger", "Antenna_Swt", "Email"].map((t) => <button key={t}>{t}</button>)}
    </MenuBar>
    <WnBody>
      <ScreensCell>
        <ScreensBox>
          <em>Screens:</em>
          <div><FlatBtn $w={61} $h={27} $f={15}>AUX 1</FlatBtn><FlatBtn $w={61} $h={27} $f={15}>AUX 2</FlatBtn><FlatBtn $w={61} $h={27} $f={15}>AUX 3</FlatBtn></div>
        </ScreensBox>
        <em>WaveNode   WN-2</em>
        <a href="#wavenode">WWW.WaveNode.Com</a>
      </ScreensCell>
      <Sunk $b={2}><CallSign>WD5Y</CallSign></Sunk>
      <Sunk $span={2}>
        <Line $p="0 0 0 7px"><FlatBtn $w={112} $h={64} $f={15}>SWR RESET</FlatBtn></Line>
        <SwrGrid>
          <span>SWR Limit</span><List label="SWR Limit" value="2.0" w={60} h={28} f={16} font={arial} />
          <span>Peak Hold Time</span><List label="Peak Hold Time" value="5" w={54} h={28} f={16} font={arial} />
          <span>SWR Monitor</span><List label="SWR Monitor" value="2" w={60} h={28} f={16} font={arial} />
          <span>Averaging Time</span><List label="Averaging Time" value="5" w={54} h={28} f={16} font={arial} />
        </SwrGrid>
      </Sunk>
      <Channel title="SDR" left={45} right={201} led="#0f0" labels={["60", "48", "36", "24", "12", "0"]} fwd={[55, 78, 110]} rfd={[135, 157, 189]} />
      <Channel title="AMP" left={60} right={201} led="#f00" labels={["1,500", "1,200", "900", "600", "300", "0"]} fwd={[68, 90, 121]} rfd={[139, 159, 191]} />
      <Channel title="VHF/UHF" left={45} right={201} led="#00f" labels={["50", "40", "30", "20", "10", "0"]} fwd={[55, 79, 110]} rfd={[134, 157, 190]} />
      <Channel title="N/A" left={39} right={201} led="#ff0" labels={["0"]} mid fwd={[51, 75, 108]} rfd={[131, 155, 187]} />
      <Group>
        <legend>Display</legend>
        <Line $h={16} $p="0 16px 0 2px">
          <Line $g={6}><Led $c="#fff" /> USB Link OK</Line>
          <RadioLabel><Check type="checkbox" defaultChecked />Dim</RadioLabel>
        </Line>
        <Line $h={18} $p="0 0 0 3px"><Radio name="all" label="All Peak" on /><Radio name="all" label="All Average" gap={5} /></Line>
        <AudioBtn>Audio On...Press To Toggle</AudioBtn>
      </Group>
      <Group>
        <legend>DC</legend>
        <Supply>SUPPLY VOLT. <output>0.00</output></Supply>
        <Supply>SUPPLY CURR. <output>N/A</output></Supply>
      </Group>
      <Group>
        <legend>Logic Outputs</legend>
        <Outs>
          <span>OFF</span><span>OFF</span><span>OFF</span><span>OFF</span>
          <FlatBtn $h={21} $f={12} $font={verdana}>AMP</FlatBtn><FlatBtn $h={21} $f={12} $font={verdana}>A-TX</FlatBtn><FlatBtn $h={21} $f={12} $font={verdana}>ATUN</FlatBtn><FlatBtn $h={21} $f={12} $font={verdana}>N/A</FlatBtn>
        </Outs>
        <Line $j="center" $p="2px 0 0"><FlatBtn $w={196} $h={16} $f={12} $font={verdana}>DEMO / TEST</FlatBtn></Line>
      </Group>
      <Group>
        <legend>Logic Inputs</legend>
        <Ins>
          {[["BCD1", "#f00", "Low"], ["BCD2", "#008000", "High"], ["BCD3", "#f00", "Low"], ["BCD4", "#f00", "Low"]].map(([n, c, v]) => (
            <Bit key={n}>{n}<Led $s={25} $c={c} /><b>{v}</b></Bit>
          ))}
        </Ins>
      </Group>
    </WnBody>
  </Win>
);

/* ---------- DDUtil ---------- */
const DdFrame = styled(Win)`
  border: 1px solid #3a7ca8;
  border-radius: 5px 5px 0 0;
  padding: 0 4px 3px;
  background: #b8d4ee;
  font: 11px ${tahoma};
`;
const DdTitle = styled.header`
  display: flex;
  align-items: center;
  gap: 3px;
  height: 25px;
  padding-left: 1px;
  font: 11px ${segoe};
  color: #102030;
  h2 { flex: 1; white-space: pre; overflow: hidden; }
`;
const AeroBtn = styled.button`
  display: grid;
  place-items: center;
  width: 31px;
  height: 16px;
  border: 1px solid #6080a0;
  border-radius: 2px;
  background: ${(p) => (p.$red ? "linear-gradient(#e09080, #c03020 50%, #d06050)" : "linear-gradient(#dce8f4, #a8c4e0 50%, #c4d8ec)")};
`;
const DdBody = styled.div`
  flex: 1;
  background: #f0f0f0;
  > div { width: 252px; height: 100%; background: #fff; overflow: hidden; }
`;
const MiscBar = styled.div`
  display: flex;
  justify-content: space-between;
  align-items: center;
  height: 17px;
  padding: 0 8px;
  background: linear-gradient(#d0dcea, #b4c6d8);
  font: 11px ${verdana};
`;
const DdRow = styled.div`
  display: flex;
  gap: 4px;
  align-items: center;
  height: ${(p) => p.$h}px;
  margin-top: ${(p) => p.$mt}px;
  padding-left: 2px;
`;
const Cell = styled.output`
  display: grid;
  place-items: center;
  flex: none;
  width: ${(p) => p.$w}px;
  height: 100%;
  border: 1px solid #888;
  background: ${(p) => p.$bg};
  color: ${(p) => p.$c || "#000"};
  font: ${(p) => (p.$b ? "bold 11px" : "11px")} ${(p) => (p.$b ? verdana : tahoma)};
  white-space: nowrap;
`;
const DdLabels = styled.div`
  display: grid;
  grid-template-columns: 44px 74px 20px 1fr;
  padding: 1px 6px 0 14px;
  gap: 4px;
  color: #1010a0;
  font: 11px/16px ${tahoma};
  white-space: nowrap;
  span:nth-child(2) { text-align: center; }
  span:nth-child(4) { text-align: right; }
`;
const SplitText = styled.div`
  padding-right: 6px;
  text-align: right;
  color: #1010a0;
  font: 11px/14px ${tahoma};
`;
const Spin = styled.input`
  width: 33px;
  height: 18px;
  border: 1px solid #999;
  padding-left: 5px;
  background: #fff;
  font: 11px ${tahoma};
  &::-webkit-inner-spin-button { opacity: 1; }
`;
const DdUtil = () => (
  <DdFrame $x={1634} $y={886} $w={286} $h={154}>
    <DdTitle>
      <KnifeIcon s={16} /><h2>DDUtil 3.2.7.0.5 - 3,750.000  ...</h2>
      <AeroBtn aria-label="Minimize"><svg width="11" height="5"><path d="M.5.5h10v3h-10z" fill="#fff" stroke="#567" /></svg></AeroBtn>
      <AeroBtn aria-label="Maximize"><svg width="11" height="9"><path d="M.5.5h10v8h-10zM3 3h5v3H3z" fill="#fff" stroke="#567" /></svg></AeroBtn>
      <AeroBtn $red aria-label="Close"><svg width="11" height="9"><path d="M1 1l9 7M10 1L1 8" stroke="#fff" strokeWidth="2.4" /></svg></AeroBtn>
    </DdTitle>
    <MenuBar $gap={19} $h={25} $pad={14} $bg="#f6f6f6" $c="#000" $f={11}><button>Setup</button><button>Options</button><button>Tools</button><button>Help</button></MenuBar>
    <DdBody>
      <div>
        <MiscBar><span>Misc</span><svg width="8" height="11"><path d="M2 1h4v5H2zM0 6.500h8M4 7v4" stroke="#000" fill="none" /></svg></MiscBar>
        <DdRow $h={20} $mt={6}>
          <Cell $w={40} $bg="#f00" $b>0000</Cell><Cell $w={63} $bg="#90ee90" $b>0.0° C</Cell><Cell $w={30} $bg="#fff" $b $c="#008000">2</Cell>
          <Cell as="button" $w={39} $bg="#f4f4f4">STBY</Cell><Cell as="button" $w={27} $bg="#ffdcaa">Set</Cell><Cell $w={25} $bg="#ffffc0" />
        </DdRow>
        <DdLabels><span>Volts</span><span>Temp</span><span>BCD</span><span>- - - Auto  Drive - - -</span></DdLabels>
        <DdRow $h={18} $mt={5}>
          <Cell as="button" $w={24} $bg="#ffffc0">SFI</Cell><Cell as="button" $w={20} $bg="#c8f4ff">Ai</Cell><Cell as="button" $w={20} $bg="#a8f0a8">Ki</Cell>
          <svg width="22" height="20" viewBox="0 0 22 20" aria-hidden="true"><path d="M11 0v20M1 10h20M4 3l14 14M18 3L4 17" stroke="#f0b040" strokeWidth="2" /><circle cx="11" cy="10" r="6" fill="#ffa828" /></svg>
          <Cell $w={55} $bg="#ffffc0">02:12:55z</Cell><Spin type="number" defaultValue="1" aria-label="Drive step" />
          <Cell as="button" $w={32} $bg="#afeeee">Off</Cell><Check type="checkbox" aria-label="Split" />
        </DdRow>
        <SplitText>- - - - Split - - - -</SplitText>
      </div>
    </DdBody>
  </DdFrame>
);

/* ---------- task bar ---------- */
const Bar = styled.footer`
  display: flex;
  align-items: center;
  flex: none;
  height: 40px;
  background: #050b14;
  color: #fff;
  font: 11px ${segoe};
  white-space: nowrap;
`;
const Slot = styled.button`
  width: ${(p) => p.$w || 49}px;
  height: 40px;
  display: grid;
  place-items: center;
  background: ${(p) => (p.$hot ? "#3a4046" : "none")};
  box-shadow: ${(p) => (p.$hot || p.$run ? "inset 0 -2px #76b9ed" : "none")};
`;
const Search = styled.label`
  display: flex;
  align-items: center;
  width: 344px;
  height: 40px;
  padding: 0 14px 0 9px;
  gap: 10px;
  background: #f2f2f2;
  input { flex: 1; min-width: 0; color: #555; font: 14px ${segoe}; &::placeholder { color: #555; opacity: 1; } }
`;
const Grip = styled.i`
  width: 4px;
  height: 16px;
  margin: 0 ${(p) => p.$m}px;
  border: solid #444;
  border-width: 0 1px;
`;
const Tray = styled.div`
  display: flex;
  align-items: center;
  margin-left: auto;
  gap: 12px;
  padding-right: ${(p) => p.$pr}px;
  color: #e8e8e8;
`;
const People = styled.svg`
  margin: 0 6px 0 12px;
`;
const Clock = styled.time`
  text-align: center;
  line-height: 18px;
`;
const More = styled.span`
  align-self: flex-start;
  line-height: 12px;
`;
const SdrBtn = styled.button`
  display: flex;
  align-items: center;
  gap: 3px;
  padding-bottom: 8px;
`;
const PowerDot = ({ c }) => <svg width="14" height="14" viewBox="0 0 14 14" aria-hidden="true"><circle cx="7" cy="7" r="7" fill={c} /><path d="M5 4a4 4 0 1 0 4 0M7 2v5" stroke="#fff" strokeWidth="1.400" fill="none" /></svg>;
const icons = {
  edge: <svg width="22" height="22" viewBox="0 0 22 22"><path d="M1 10C2 3 7 0 12 0c6 0 10 5 9 12H7c0 4 3 6 7 6 3 0 5-1 6-2v5c-2 1-4 1-7 1C6 22 3 17 5 12c1-3 4-5 7-6-2-1-7-1-11 4zM8 9h7c0-5-7-4-7 0z" fill="#0e7ad8" fillRule="evenodd" /></svg>,
  folder: <svg width="22" height="20"><path d="M0 1h8l2 2h12v15H0z" fill="#f0c860" /><path d="M0 6h22v12H0z" fill="#ffe398" /><path d="M4 20v-9h14v9h-4v-5H8v5z" fill="#38b0e8" /></svg>,
  store: <svg width="24" height="24"><path d="M1 7h22v16H1z" fill="#fff" /><path d="M8 7V4q0-3 4-3t4 3v3" stroke="#fff" strokeWidth="1.500" fill="none" /><path d="M7 10h4v4H7z" fill="#f05020" /><path d="M13 10h4v4h-4z" fill="#7ab800" /><path d="M7 16h4v4H7z" fill="#00a0f0" /><path d="M13 16h4v4h-4z" fill="#ffb800" /></svg>,
  mail: <svg width="24" height="20"><path d="M0 7L12 0l12 7v13H0z" fill="#fff" /><path d="M0 7h24l-10 8 2-5z" fill="#050b14" /></svg>,
  radio: <svg width="24" height="20"><rect width="24" height="20" fill="#aaa592" /><path d="M2 4l14-3 7 5-2 11-16-1z" fill="#222" /><path d="M5 12l14-2" stroke="#999" strokeWidth="2" strokeDasharray="2 2" /></svg>,
  cog: <svg width="24" height="24"><rect width="24" height="24" fill="#0878d8" /><circle cx="12" cy="12" r="5" fill="none" stroke="#fff" strokeWidth="3" /><circle cx="12" cy="12" r="8" fill="none" stroke="#fff" strokeWidth="3" strokeDasharray="3 3.300" /></svg>,
  andrea: <svg width="24" height="24" viewBox="0 0 24 24"><circle cx="12" cy="12" r="11" fill="#223028" stroke="#5ad05a" /><path d="M4 15l3-1 2-3 1 5 4-11 4 13M9 12h6" stroke="#28e028" strokeWidth="2" fill="none" /></svg>,
  log: <svg width="24" height="24"><rect width="24" height="24" fill="#e8e8e8" /><path d="M0 5h10l1-5 1 5h12" stroke="#d02020" fill="none" /><text x="12" y="19" textAnchor="middle" fontFamily={arial} fontWeight="bold" fontSize="6">Log4OM</text></svg>,
  any: <svg width="24" height="24"><rect width="24" height="24" rx="2" fill="#f04438" /><path d="M10 7l5 5-5 5-5-5z" fill="#fff" /><path d="M13 7l5 5-5 5" stroke="#fff" strokeWidth="1.500" fill="none" /></svg>,
  voice: <svg width="24" height="24"><rect width="24" height="11" fill="#f04830" /><rect y="13" width="24" height="11" fill="#38485c" /><g fontFamily={arial} fontSize="6" fontWeight="bold" fill="#fff" textAnchor="middle"><text x="12" y="8">VOICE</text><text x="12" y="21">MEETER</text></g></svg>,
};
const Apps = () => (
  <>
    {["edge", "folder", "store", "mail", "radio", "cog", "andrea", "log", "any", "voice"].map((n) => (
      <Slot key={n} aria-label={n} $run={["radio", "andrea", "voice"].includes(n)}>{icons[n]}</Slot>
    ))}
    <Slot $run aria-label="WaveNode"><WaveIcon s={24} /></Slot>
    <Slot $run aria-label="DDUtil"><KnifeIcon /></Slot>
    <Slot $hot aria-label="Thetis"><HpsdrIcon s={24} dim /></Slot>
  </>
);
const StartIcon = () => <svg width="16" height="16" viewBox="0 0 16 16"><path d="M0 2.300L6.500 1.400V7.500H0zM7.500 1.200L16 0v7.500H7.500zM0 8.500h6.500v6.200L0 13.700zM7.500 8.500H16V16l-8.500-1.200z" fill="#fff" /></svg>;
const Ring = ({ c }) => <svg width="22" height="22"><circle cx="11" cy="11" r="9" fill="none" stroke={c} strokeWidth="3" /></svg>;
const TaskView = () => <svg width="17" height="16" fill="none" stroke="#fff"><path d="M1.500 3V.5h10V3M1.500 13v2.500h10V13M1.500 4.500h10v7h-10zM15.500 0v3M15.500 5v5M15.500 12v4" /></svg>;

/* ---------- Thetis ---------- */
const ThetisWin = styled.section`
  flex: 1;
  display: flex;
  flex-direction: column;
  background: #000;
  color: #fff;
  font: 12px ${arial};
`;
const Console = styled.div`
  display: flex;
  height: 96px;
  padding: 6px 35px 0 7px;
`;
const LeftConsole = styled.div`
  display: grid;
  grid-template-rows: 26px 51px;
  row-gap: 7px;
`;
const Row = styled.div`
  display: flex;
  align-items: center;
  gap: ${(p) => p.$g || 0}px;
  padding-left: ${(p) => p.$pl || 0}px;
`;
const Pill = styled.button`
  width: ${(p) => p.$w || 48}px;
  height: ${(p) => p.$h || 20}px;
  border-radius: 9px;
  background: ${(p) => (p.$on ? "#d86010" : "#3888ff")};
  color: ${(p) => p.$c || "#fff"};
  font: bold ${(p) => p.$f || 12}px/18px ${(p) => p.$font || tahoma};
  box-shadow: inset 0 -2px 3px rgba(0, 0, 0, 0.25);
  white-space: nowrap;
`;
const DarkRadio = styled(RadioInput)`
  border: 0;
  &:checked { background: radial-gradient(circle, #222 0 3px, #fff 4px); }
`;
const SmallRow = styled(Row)`
  font-size: 11px;
`;
const Sliders = styled.div`
  display: grid;
  grid-template-columns: 74px 100px;
  grid-template-rows: 24px 24px;
  gap: 2px 12px;
  label { text-align: right; font: 12px/18px ${arial}; white-space: pre; }
`;
const Range = styled.input`
  appearance: none;
  display: block;
  width: 100%;
  height: 24px;
  border: 1px solid #999;
  background: linear-gradient(transparent 11px, #000 11px 14px, transparent 14px) 4px 0 / calc(100% - 8px) 100% no-repeat, linear-gradient(#111, #2c2c2c 60%, #555);
  &::-webkit-slider-thumb {
    appearance: none;
    width: 16px;
    height: 20px;
    border-top: 2px solid #667880;
    background: linear-gradient(90deg, #000 7px, #fff 7px 9px, #000 9px) 0 2px / 100% 14px no-repeat #000;
  }
`;
const Combo = styled.span`
  display: inline-grid;
  width: ${(p) => p.$w}px;
  height: 21px;
  align-items: center;
  background: #e1e1e1;
  border: 1px solid #adadad;
  select, svg { grid-area: 1 / 1; }
  select { appearance: none; padding-left: 3px; color: #000; font: 11px ${segoe}; height: 19px; }
  svg { justify-self: end; margin-right: 4px; pointer-events: none; }
`;
const Select = ({ label, value, w }) => <Combo $w={w}><select aria-label={label} defaultValue={value}><option>{value}</option></select><Chevron /></Combo>;
const Stack = styled.div`
  display: flex;
  flex-direction: column;
  align-items: center;
  align-self: flex-end;
  gap: 4px;
  font: 12px/16px ${arial};
`;
const DriveBox = styled.div`
  width: 100px;
`;
const DriveRow = styled(Row)`
  align-self: flex-start;
`;
const MidConsole = styled.div`
  display: flex;
  gap: 13px;
  margin-left: 256px;
`;
const ModeGrid = styled.div`
  display: grid;
  grid-template-columns: 48px 48px;
  grid-auto-rows: 20px;
  gap: 7px 12px;
  padding-top: 3px;
`;
const Vfo = styled.fieldset`
  width: 231px;
  height: 88px;
  border: 1px solid #ddd;
  margin-top: -6px;
  padding: 0 4px 0 7px;
  legend { color: #f00; font: bold 12px/14px ${tahoma}; padding: 0 2px; }
`;
const Lcd = styled.div`
  display: flex;
  justify-content: space-between;
  align-items: center;
  border: 2px solid #ddd;
  height: ${(p) => p.$h}px;
  width: ${(p) => p.$w}px;
  padding: 0 3px;
  color: ${(p) => p.$c};
  font: ${(p) => p.$font};
`;
const ModeText = styled.div`
  color: #ff9000;
  font: bold 11px/16px ${tahoma};
`;
const CenterText = styled.span`
  margin: auto;
  white-space: nowrap;
`;
const BandRow = styled.div`
  display: flex;
  justify-content: space-between;
  align-items: center;
  margin-top: 3px;
  padding-right: 1px;
`;
const TxBox = styled.span`
  border: 1px solid #f88;
  border-color: #800 #f88 #f88 #800;
  padding: 2px 3px;
  display: grid;
`;
const RightConsole = styled.div`
  width: 298px;
  margin-left: auto;
  padding-top: 1px;
`;
const MeterTop = styled.div`
  display: grid;
  grid-template-columns: 72px 1fr 72px;
  gap: 5px;
`;
const SigOut = styled.output`
  display: grid;
  place-items: center;
  height: 36px;
  border: 2px solid #ddd;
  color: #ff0;
  font: 21px ${mono};
`;
const MeterSvg = styled.svg`
  margin: 9px 0 0 5px;
`;
const FreqScale = styled.div`
  display: flex;
  height: 64px;
  padding-left: 31px;
  padding-right: 18px;
  color: #ff0;
  font: 13px/26px ${arial};
  span { flex: 1; padding-left: 77px; white-space: nowrap; }
`;
const Pan = styled.div`
  flex: 1;
  position: relative;
  min-height: 0;
  > svg { position: absolute; inset: 0; width: 100%; height: 100%; overflow: hidden; }
`;
const DbScale = styled.div`
  position: absolute;
  left: 50.4%;
  top: 34px;
  color: #ff0;
  font: 12px ${arial};
  display: grid;
  grid-auto-rows: 1fr;
  align-items: center;
  height: 666px;
`;
const DropMenu = styled.div`
  position: absolute;
  z-index: 2;
  left: -1px;
  top: 19px;
  width: 159px;
  padding: 2px;
  border: 1px solid #999;
  background: linear-gradient(90deg, #f0f0f0 0 23px, #fff 24px);
  color: #000;
`;
const DropItem = styled.button`
  && {
    display: grid;
    grid-template-columns: 20px 1fr;
    gap: 14px;
    align-items: center;
    width: 100%;
    height: 22px;
    text-align: left;
  }
  i { display: grid; place-items: center; height: 20px; font: 12px ${verdana}; }
  i:not(:empty) { background: #b5d7f3; border: 1px solid #0078d7; }
`;
const OpenMenu = styled.div`
  position: relative;
  width: 39px;
  height: 21px;
  margin-left: -11px;
  border: 1px solid #ccc;
  border-bottom: 0;
  background: #fbfbfb;
  color: #efefef;
  text-align: center;
  line-height: 19px;
`;
const StatusLine = styled.div`
  display: flex;
  justify-content: flex-end;
  gap: 30px;
  height: 20px;
  padding-right: 12px;
  color: #1e90ff;
  font: 13px/17px ${arial};
`;
const PanRow = styled.div`
  display: grid;
  grid-template-columns: 28px 1fr 49px 88px 35px 1fr 158px;
  gap: 2px 5px;
  align-items: center;
  padding-left: 2px;
  height: 24px;
`;
const Zooms = styled.div`
  display: flex;
  gap: 3px;
`;
const Bands = styled.div`
  display: grid;
  grid-template-columns: repeat(14, 48px);
  gap: 3px 2px;
  justify-content: center;
  height: 56px;
  padding-top: 5px;
  align-content: start;
`;

const panTrace = (() => {
  const r = rng(4242);
  const pk = [[75, 640, 4], [80, 575, 3], [84, 590, 3], [90, 620, 3], [139, 590, 3], [144, 565, 4], [150, 580, 3], [315, 640, 3], [319, 560, 2], [321, 505, 3], [678, 640, 2], [736, 690, 3], [905, 610, 4], [912, 560, 4], [920, 555, 3], [925, 580, 4], [933, 550, 3], [938, 482, 4], [946, 540, 3], [952, 640, 6], [985, 655, 3], [991, 630, 2], [1001, 650, 3], [1009, 700, 3], [1032, 660, 3], [1038, 690, 2], [1225, 690, 6], [1295, 675, 7], [1312, 665, 3], [1355, 675, 3], [1432, 620, 5], [1440, 575, 4], [1447, 600, 4], [1465, 640, 4], [1472, 630, 4], [1481, 610, 4], [1487, 620, 3], [1530, 680, 4], [1538, 660, 4], [1545, 650, 4], [1722, 610, 5], [1730, 600, 5], [1736, 590, 3], [1742, 484, 3], [1748, 620, 4], [1918, 660, 4]];
  const out = [];
  for (let x = 0; x <= 1920; x += 1) {
    const base = 714 + (x / 1920) * 13 + (r() - 0.5) * 18 - (r() > 0.95 ? 8 : 0);
    let y = base;
    for (const [cx, cy, w] of pk) {
      const d = Math.abs(x - cx) / w;
      if (d < 3) y = Math.min(y, base - (base - cy) * Math.exp(-d * 0.9) * (d < 0.3 ? 1 : 0.7 + r() * 0.3));
    }
    out.push(`${x},${(y - 207).toFixed(1)}`);
  }
  return out.join(" ");
})();

const Thetis = () => (
  <ThetisWin>
    <TitleBar $h={23} $pad={2} $active><HpsdrIcon s={16} /><h2>Thetis v2.6.4 (4/14/19) WD5Y</h2><Caption restore /></TitleBar>
    <MenuBar $gap={20} $h={24} $pad={15} $bg="#000" $c="#fff">
      {["Setup", "Memory", "Wave", "Equalizer", "XVTRs", "CWX", "Diversity", "Expand", "Spot", "Display Controls", "DSP", "Filter", "RX2", "Linearity", "RA", "WB", "PI"].map((t) => <button key={t}>{t}</button>)}
      <OpenMenu>
        BPF
        <DropMenu>
          <DropItem><i>✓</i>BPF-1 @ ByPass</DropItem>
          <DropItem><i />BPF-2 @ ByPass</DropItem>
        </DropMenu>
      </OpenMenu>
    </MenuBar>
    <Console>
      <LeftConsole>
        <Row $g={2} $pl={26}>
          <Pill $on $w={56} $h={26} $f={13} $font={arial}>POWER</Pill><Pill $w={44} $h={26} $f={12} $font={arial}>RX2</Pill>
          <SmallRow $g={19} $pl={14}>
            <RadioLabel $gap={5}><DarkRadio type="radio" name="rx" defaultChecked />RX1</RadioLabel>
            <RadioLabel $gap={5}><DarkRadio type="radio" name="rx" />RX2</RadioLabel>
          </SmallRow>
        </Row>
        <Row $g={3}>
          <Sliders>
            <label htmlFor="af">RX1 AF:  20</label><Range id="af" type="range" defaultValue="20" />
            <label htmlFor="gain">AGC Gain:  70</label><Range id="gain" type="range" defaultValue="63" />
          </Sliders>
          <Stack>AGC<Select label="AGC" value="Med" w={50} /></Stack>
          <Row $pl={4}><Stack>ATT<Select label="ATT" value="-20dB" w={55} /></Stack></Row>
          <DriveRow $g={14}><label htmlFor="drive">Drive:  0</label><DriveBox><Range id="drive" type="range" defaultValue="0" /></DriveBox></DriveRow>
        </Row>
      </LeftConsole>
      <MidConsole>
        <ModeGrid>{["VOX", "MON", "DUP", "TUN", "CTUN", "MOX"].map((t) => <Pill key={t} $f={12}>{t}</Pill>)}</ModeGrid>
        <Vfo>
          <legend>VFO A</legend>
          <Lcd $h={38} $w={214} $c="#ff4000" $font={`22px ${mono}`}><ModeText>LSB<br />2.7k</ModeText><span>00</span></Lcd>
          <BandRow>
            <Lcd $h={25} $w={187} $c="#0f0" $font={`16px ${arial}`}><CenterText>75M Ext/Adv SSB</CenterText></Lcd>
            <TxBox><Pill $on $w={20} $h={20} $f={11}>TX</Pill></TxBox>
          </BandRow>
        </Vfo>
      </MidConsole>
      <RightConsole>
        <MeterTop><Select label="RX meter" value="Signal" w={72} /><SigOut>-58 dBm</SigOut><Select label="TX meter" value="Ref Pwr" w={72} /></MeterTop>
        <MeterSvg width="288" height="40" viewBox="0 0 288 40" role="img" aria-label="Signal meter">
          <path d="M.5 39V.5H287" stroke="#999" fill="none" strokeWidth="2" />
          <path d="M0 39H287V0" stroke="#fff" fill="none" strokeWidth="2" />
          <path d="M1 35h143" stroke="#fff" strokeWidth="2" />
          <path d="M144 35h138" stroke="#f00" strokeWidth="2" />
          <g stroke="#fff" strokeWidth="2">{[30, 58, 86, 114, 143].map((x) => <path key={x} d={`M${x} 35v-7`} />)}</g>
          <g stroke="#fff">{[16, 44, 72, 100, 128].map((x) => <path key={x} d={`M${x + 0.5} 35v-4`} />)}</g>
          <g stroke="#f00" strokeWidth="2">{[190, 235, 281].map((x) => <path key={x} d={`M${x} 35v-7`} />)}</g>
          <g stroke="#f00">{[166, 212, 257].map((x) => <path key={x} d={`M${x + 0.5} 35v-4`} />)}</g>
          <g fontFamily={arial} fontWeight="bold" fontSize="9" textAnchor="middle">
            {[["1", 30], ["3", 58], ["5", 86], ["7", 114], ["9", 143]].map(([t, x]) => <text key={t} x={x} y="26" fill="#fff">{t}</text>)}
            {[["+20", 190], ["+40", 235], ["+60", 278]].map(([t, x]) => <text key={t} x={x} y="26" fill="#f00">{t}</text>)}
          </g>
          <path d="M176 2v36" stroke="#ff0" strokeWidth="2" />
        </MeterSvg>
      </RightConsole>
    </Console>
    <FreqScale>{range(10).map((i) => <span key={i}>{(3.66 + i * 0.02).toFixed(3)}</span>)}</FreqScale>
    <Pan>
      <svg viewBox="0 0 1920 733" preserveAspectRatio="none" role="img" aria-label="Panadapter">
        <g stroke="#2d2d2d">
          {range(52).map((i) => <path key={i} d={`M${Math.round(6.8 + i * 37.42) + 0.5} 0V733`} />)}
          {range(12).map((i) => <path key={i} d={`M0 ${Math.round(i * 66.6) + 0.5}H1920`} />)}
        </g>
        <g stroke="#b4b4b4">{range(10).map((i) => <path key={i} d={`M${Math.round(118.500 + i * 187.1) + 0.5} 0V733`} />)}</g>
        <rect x="933" y="0" width="26" height="733" fill="#008080" fillOpacity=".5" />
        <polygon points={`0,733 ${panTrace} 1920,733`} fill="#fff" fillOpacity=".4" />
        <path d="M933 0V733M959 0V733" stroke="#ff0" strokeWidth="2" />
        <path d="M961.500 0V733" stroke="#f00" strokeWidth="3" />
        <polyline points={panTrace} fill="none" stroke="#fff" />
        <path d="M60 240.500H1920" stroke="#5a7850" />
        <rect x="38" y="232" width="9" height="9" fill="#b8ff20" />
        <text x="50" y="240" fill="#b8ff20" fontFamily={arial} fontSize="10">-G</text>
      </svg>
      <DbScale>{range(10).map((i) => <div key={i}>{-40 - i * 10}</div>)}</DbScale>
    </Pan>
    <StatusLine><span>-2358.3Hz</span><span>-71.7dBm</span><span>3.747 642 MHz</span></StatusLine>
    <PanRow>
      <label htmlFor="pan">Pan:</label><Range id="pan" type="range" defaultValue="50" />
      <Pill>Center</Pill><Select label="Display mode" value="Panadapter" w={88} />
      <label htmlFor="zoom">Zoom:</label><Range id="zoom" type="range" defaultValue="70" />
      <Zooms>{["0.5x", "1x", "2x", "4x"].map((t) => <Pill key={t} $w={37}>{t}</Pill>)}</Zooms>
    </PanRow>
    <Bands>
      {["160", "80", "60", "40", "30", "20", "17", "15", "12", "10", "6"].map((t) => <Pill key={t} $on={t === "80"}>{t}</Pill>)}
      <Pill $c="#90ee90">WWV</Pill><Pill $c="#ff8070">SWL</Pill><Pill $c="#ffd700">VHF+</Pill>
      <span />
      {["LSB", "USB", "DSB", "CWL", "CWU", "FM", "AM", "SAM", "SPEC", "DIGL", "DIGU", "DRM"].map((t) => <Pill key={t} $on={t === "LSB"}>{t}</Pill>)}
    </Bands>
  </ThetisWin>
);

export default function App() {
  return (
    <>
      <Global />
      <Screens>
        <Monitor>
          <Desktop>
            <Wallpaper />
            <Shortcuts><HpsdrIcon s={44} /><WaveIcon s={48} /></Shortcuts>
            <Andrea />
            <Aux />
            <WaveNode />
            <Wideband />
            <DdUtil />
          </Desktop>
          <Bar>
            <Slot $w={48} aria-label="Start"><StartIcon /></Slot>
            <Search>
              <Ring c="#111" />
              <input placeholder="Type here to search" aria-label="Search" />
              <svg width="12" height="18" fill="none" stroke="#333"><rect x="3.500" y=".5" width="5" height="11" rx="2.500" /><path d="M.5 8v3q0 3 5.500 3t5.500-3V8M6 14v3.500" /></svg>
            </Search>
            <Slot aria-label="Task view"><TaskView /></Slot>
            <Grip $m={8} />
            <Apps />
            <Tray $pr={25}>
              <Grip $m={-2} />
              <span>SDR</span>
              <SdrBtn><PowerDot c="#4888c0" />SDR Start</SdrBtn>
              <SdrBtn><PowerDot c="#e05838" />SDR Exit</SdrBtn>
              <Grip $m={16} />
              <span>ANAN-PWR</span><More>»</More><Grip $m={2} /><span>ANAN-BTLDR</span><More>»</More>
              <People width="18" height="16" fill="none" stroke="#fff"><circle cx="5" cy="7" r="2.500" /><path d="M1 15q0-5 4-5t4 5M9 10q4-1 6 3" /><circle cx="12" cy="3" r="2.500" /></People>
              <svg width="12" height="7" fill="none" stroke="#fff"><path d="M1 6l5-5 5 5" /></svg>
              <svg width="16" height="14" fill="none" stroke="#fff"><path d="M4.500 2.500h11v7h-11zM7 12.500h6M10 10v3M.5.5h4v4h-4zM2.500 5v6h3" /></svg>
              <svg width="16" height="14" fill="none" stroke="#fff"><path d="M1 5h2l4-4v12L3 9H1zM9 5q1 2 0 4M11 3q2.500 4 0 8M13 1q4 6 0 12" /></svg>
              <Clock>9:12 PM<br />4/14/2019</Clock>
              <svg width="16" height="16" fill="none" stroke="#fff"><path d="M.5.5h15v11H10l-2 3-2-3H.5z" /></svg>
            </Tray>
          </Bar>
        </Monitor>
        <Monitor>
          <Thetis />
          <Bar>
            <Slot $w={48} aria-label="Start"><StartIcon /></Slot>
            <Slot aria-label="Cortana"><Ring c="#fff" /></Slot>
            <Slot aria-label="Task view"><TaskView /></Slot>
            <Apps />
            <Tray $pr={6}><Clock>9:12 PM<br />4/14/2019</Clock></Tray>
          </Bar>
        </Monitor>
      </Screens>
    </>
  );
}
